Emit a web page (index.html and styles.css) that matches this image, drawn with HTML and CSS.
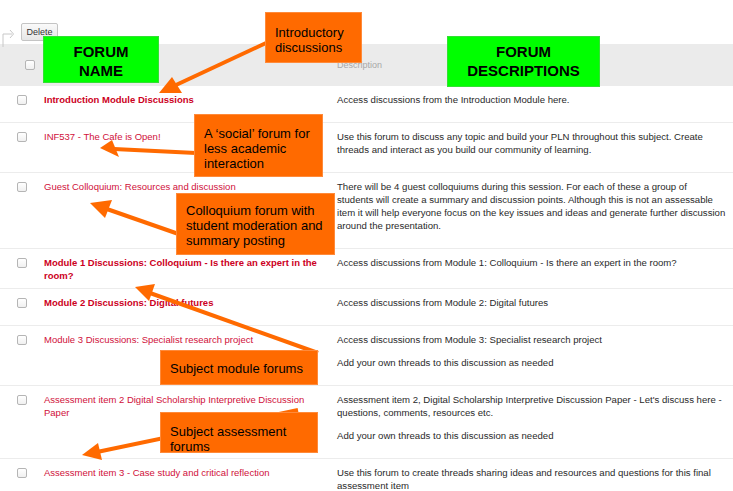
FILE: index.html
```html
<!DOCTYPE html>
<html>
<head>
<meta charset="utf-8">
<link rel="stylesheet" href="styles.css">
</head>
<body>
<div class="page">
  <div class="toolbar">
    <svg class="branch" width="16" height="20" viewBox="0 0 16 20"><path d="M3 20 V7 H12" fill="none" stroke="#c8c8c8" stroke-width="1"/><path d="M10 3 L13.5 7 L10 11" fill="none" stroke="#c8c8c8" stroke-width="1"/></svg>
    <button class="btn">Delete</button>
  </div>
  <div class="list">
    <div class="row head">
      <span class="cb"></span>
      <span class="name"></span>
      <span class="desc">Description</span>
    </div>
    <div class="row">
      <span class="cb"></span>
      <a class="name strong">Introduction Module Discussions</a>
      <div class="desc"><p>Access discussions from the Introduction Module here.</p></div>
    </div>
    <div class="row">
      <span class="cb"></span>
      <a class="name">INF537 - The Cafe is Open!</a>
      <div class="desc"><p>Use this forum to discuss any topic and build your PLN throughout this subject. Create threads and interact as you build our community of learning.</p></div>
    </div>
    <div class="row">
      <span class="cb"></span>
      <a class="name">Guest Colloquium: Resources and discussion</a>
      <div class="desc"><p>There will be 4 guest colloquiums during this session. For each of these a group of<br>students will create a summary and discussion points. Although this is not an assessable item it will help everyone focus on the key issues and ideas and generate further discussion around the presentation.</p></div>
    </div>
    <div class="row">
      <span class="cb"></span>
      <a class="name strong">Module 1 Discussions: Colloquium - Is there an expert in the room?</a>
      <div class="desc"><p>Access discussions from Module 1: Colloquium - Is there an expert in the room?</p></div>
    </div>
    <div class="row">
      <span class="cb"></span>
      <a class="name strong">Module 2 Discussions: Digital futures</a>
      <div class="desc"><p>Access discussions from Module 2: Digital futures</p></div>
    </div>
    <div class="row">
      <span class="cb"></span>
      <a class="name">Module 3 Discussions: Specialist research project</a>
      <div class="desc"><p>Access discussions from Module 3: Specialist research project</p><p>Add your own threads to this discussion as needed</p></div>
    </div>
    <div class="row">
      <span class="cb"></span>
      <a class="name">Assessment item 2 Digital Scholarship Interpretive Discussion Paper</a>
      <div class="desc"><p>Assessment item 2, Digital Scholarship Interpretive Discussion Paper - Let's discuss here - questions, comments, resources etc.</p><p>Add your own threads to this discussion as needed</p></div>
    </div>
    <div class="row">
      <span class="cb"></span>
      <a class="name">Assessment item 3 - Case study and critical reflection</a>
      <div class="desc"><p>Use this forum to create threads sharing ideas and resources and questions for this final assessment item</p></div>
    </div>
  </div>

  <svg class="arrows" width="733" height="491" viewBox="0 0 733 491">
    <g stroke="#ff6a00" stroke-width="4" fill="none" stroke-linecap="butt">
      <line x1="266" y1="43" x2="176" y2="85"/>
      <line x1="196" y1="153" x2="114" y2="149"/>
      <line x1="190" y1="238" x2="104" y2="208"/>
      <line x1="318" y1="353" x2="150" y2="293"/>
      <line x1="298" y1="410" x2="97" y2="452"/>
    </g>
    <g fill="#ff6a00">
      <polygon points="159,93 172,77 182,93"/>
      <polygon points="100,148 112,140 119,157"/>
      <polygon points="90,203 112,200 105,218"/>
      <polygon points="135,287 155,284 149,301"/>
      <polygon points="82,455 98,443 102,460"/>
    </g>
  </svg>

  <div class="tag green tag-name">FORUM<br>NAME</div>
  <div class="tag green tag-desc">FORUM<br>DESCRIPTIONS</div>

  <div class="note note-intro">Introductory<br>discussions</div>
  <div class="note note-social">A ‘social’ forum for<br>less academic<br>interaction</div>
  <div class="note note-coll">Colloquium forum with<br>student moderation and<br>summary posting</div>
  <div class="note note-module">Subject module forums</div>
  <div class="note note-assess">Subject assessment<br>forums</div>
</div>
</body>
</html>
```

FILE: styles.css
```css
html, body {
  margin: 0;
  padding: 0;
  background: #fff;
}
body {
  font-family: "Liberation Sans", Arial, sans-serif;
  width: 733px;
  height: 491px;
  overflow: hidden;
}
.page {
  position: relative;
  width: 733px;
  height: 491px;
}
.toolbar {
  height: 44px;
  display: flex;
  align-items: flex-start;
  box-sizing: border-box;
  padding-top: 23px;
}
.branch {
  margin-left: 0;
  margin-top: 4px;
  width: 16px;
  height: 20px;
}
.btn {
  margin-left: 5px;
  height: 18px;
  width: 37px;
  padding: 0;
  font-family: "Liberation Sans", Arial, sans-serif;
  font-size: 9px;
  color: #333;
  background: linear-gradient(#fafafa, #e6e6e6);
  border: 1px solid #c4c4c4;
  border-radius: 2px;
}
.list {
  font-size: 9.6px;
  line-height: 13px;
  color: #2a2a2a;
}
.row {
  display: grid;
  grid-template-columns: 44px 293px 1fr;
  padding: 7px 0 6px;
  border-bottom: 1px solid #ececec;
  box-sizing: border-box;
}
.row.head {
  background: #ebebeb;
  height: 42px;
  padding: 0;
  align-items: center;
  border-bottom: none;
}
.cb {
  display: block;
  width: 8px;
  height: 8px;
  margin-left: 17px;
  margin-top: 2px;
  border: 1px solid #b5b5b5;
  border-radius: 2px;
  background: linear-gradient(#fff, #f0f0f0);
}
.head .cb {
  margin-left: 25px;
  margin-top: 0;
}
.head .desc {
  color: #a8a8a8;
  font-size: 9px;
}
.name {
  color: #d0103a;
  font-size: 9.5px;
  padding-right: 13px;
}
.name.strong {
  font-weight: bold;
  color: #cc0022;
}
.desc {
  padding-right: 0;
}
.desc p {
  margin: 0 0 10px;
}
.arrows {
  position: absolute;
  left: 0;
  top: 0;
}
.tag {
  position: absolute;
  box-sizing: border-box;
  font-weight: bold;
  font-size: 15px;
  line-height: 19px;
  color: #000;
  text-align: center;
}
.green {
  background: #00ff00;
  border: 1px solid #33e033;
}
.tag-name {
  left: 43px;
  top: 36px;
  width: 116px;
  height: 47px;
  padding-top: 5px;
}
.tag-desc {
  left: 447px;
  top: 36px;
  width: 153px;
  height: 51px;
  padding-top: 5px;
}
.note {
  position: absolute;
  box-sizing: border-box;
  background: #ff6a00;
  border: 1px solid #ff8a3a;
  color: #000;
  font-size: 13px;
  line-height: 15px;
  padding-left: 9px;
}
.note-intro {
  left: 265px;
  top: 12px;
  width: 97px;
  height: 51px;
  padding-top: 12px;
}
.note-social {
  left: 194px;
  top: 114px;
  width: 129px;
  height: 63px;
  padding-top: 11px;
}
.note-coll {
  left: 176px;
  top: 193px;
  width: 159px;
  height: 62px;
  padding-top: 9px;
}
.note-module {
  left: 160px;
  top: 350px;
  width: 158px;
  height: 35px;
  padding-top: 10px;
}
.note-assess {
  left: 160px;
  top: 412px;
  width: 158px;
  height: 41px;
  padding-top: 11px;
}
```
